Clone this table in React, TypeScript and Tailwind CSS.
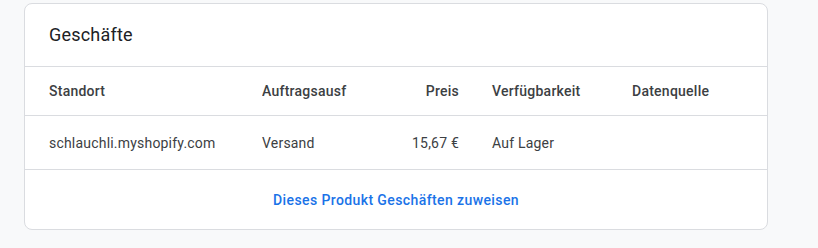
export default function App() {
  return (
    <div className="h-[248px] w-[818px] bg-[#f8f9fa] pl-6 pt-[3px] font-['Roboto',sans-serif]">
      <div className="w-[744px] overflow-hidden rounded-lg border border-[#dadce0] bg-white">
        <div className="flex h-[63px] items-center border-b border-[#dadce0] px-6">
          <h2 className="text-[18px] leading-6 tracking-[0.2px] text-[#202124]">Geschäfte</h2>
        </div>
        <div className="flex h-[49px] items-center border-b border-[#dadce0] pl-6 text-sm font-medium tracking-[0.25px] text-[#3c4043]">
          <div className="w-[213px]">Standort</div>
          <div className="w-[150px] truncate">Auftragsausf</div>
          <div className="w-[47px] text-right">Preis</div>
          <div className="ml-[33px] w-[140px]">Verfügbarkeit</div>
          <div>Datenquelle</div>
        </div>
        <div className="flex h-[54px] items-center border-b border-[#dadce0] pl-6 text-sm tracking-[0.2px] text-[#3c4043]">
          <div className="w-[213px]">schlauchli.myshopify.com</div>
          <div className="w-[150px]">Versand</div>
          <div className="w-[47px] whitespace-nowrap text-right">15,67 €</div>
          <div className="ml-[33px] w-[140px]">Auf Lager</div>
          <div></div>
        </div>
        <div className="flex h-[59px] items-center justify-center">
          <button className="text-sm font-medium tracking-[0.4px] text-[#1a73e8]">Dieses Produkt Geschäften zuweisen</button>
        </div>
      </div>
    </div>
  )
}
